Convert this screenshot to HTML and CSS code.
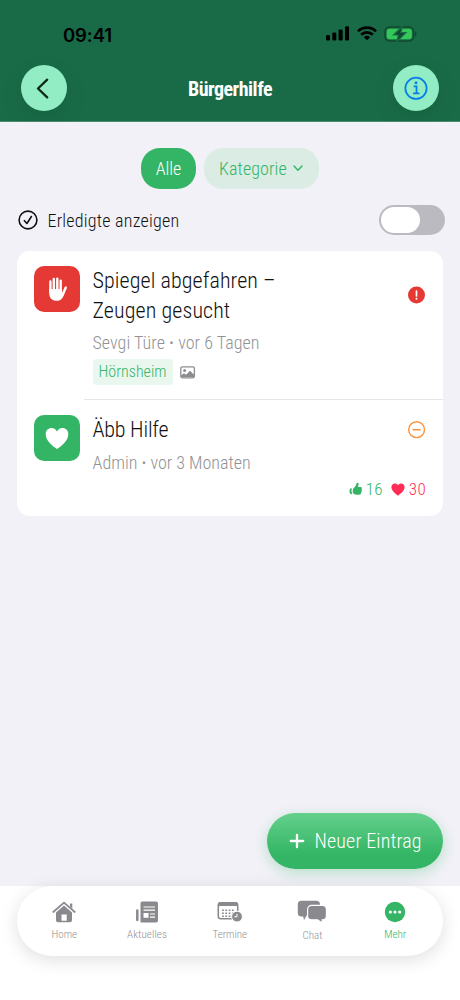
FILE: index.html
```html
<!DOCTYPE html>
<html lang="de">
<head>
<meta charset="utf-8">
<title>Bürgerhilfe</title>
<link rel="stylesheet" href="styles.css">
</head>
<body>
<div class="app">
  <header class="header">
    <div class="status">
      <span class="clock">09:41</span>
      <div class="status-icons">
        <svg width="24" height="15" viewBox="0 0 24 15"><rect x="0" y="9" width="4" height="5.500" rx="1.200"/><rect x="6.300" y="6.500" width="4" height="8" rx="1.200"/><rect x="12.600" y="3.500" width="4" height="11" rx="1.200"/><rect x="19" y="0.300" width="4" height="14.200" rx="1.200"/></svg>
        <svg class="wifi" width="20" height="15" viewBox="0 0 20 15" fill="none" stroke="#000" stroke-width="2.700"><path d="M1 5.400a12.800 12.800 0 0 1 18 0"/><path d="M4.200 8.800a8.300 8.300 0 0 1 11.600 0"/><path d="M10 14.300L6.900 11.300a4.500 4.500 0 0 1 6.200 0z" fill="#000" stroke="none"/></svg>
        <svg width="34" height="16" viewBox="0 0 34 16"><rect x="1" y="1" width="28.600" height="14" rx="4.500" fill="none" stroke="#104a2c" stroke-width="1.500"/><path d="M31 5.500c2 .6 2 4.400 0 5z" fill="#104a2c"/><rect x="2.700" y="2.700" width="25.200" height="10.600" rx="3" fill="#35c759"/><path d="M18.500 0L9.500 9h5l-2 7 9.500-9.500h-5.200z" fill="#104a2c" stroke="#196b47" stroke-width="1.200"/></svg>
      </div>
    </div>
    <div class="bar">
      <button class="round"><svg width="46" height="46" viewBox="0 0 46 46" fill="none" stroke="#0b2b12" stroke-width="2.300" stroke-linecap="round" stroke-linejoin="round"><path d="M26.200 14.700L17 23.500l9.200 8.900"/></svg></button>
      <h1 class="title"><span class="t t-head">Bürgerhilfe</span></h1>
      <button class="round"><svg width="46" height="46" viewBox="0 0 46 46" fill="none" stroke="#087fe8" stroke-width="1.800"><circle cx="23" cy="23.300" r="10.600"/><path d="M20.600 21.300h2.900v6.700M20 28.300h6.500"/><circle cx="23" cy="17.800" r="1.500" fill="#087fe8" stroke="none"/></svg></button>
    </div>
  </header>

  <main class="content">
    <div class="filters">
      <button class="chip chip-on"><span class="t">Alle</span></button>
      <button class="chip chip-cat"><span class="t t-cat">Kategorie</span><svg width="10" height="7" viewBox="0 0 10 7" fill="none" stroke="#33b565" stroke-width="1.400" stroke-linecap="round" stroke-linejoin="round"><path d="M1 1l4 4.300L9 1"/></svg></button>
    </div>
    <div class="toggle-row">
      <svg width="20" height="20" viewBox="0 0 20 20" fill="none" stroke="#111" stroke-width="1.600" stroke-linecap="round" stroke-linejoin="round"><circle cx="10" cy="10" r="8.900"/><path d="M6.400 10.700l2.500 2.800 4.500-7"/></svg>
      <span class="t t-done">Erledigte anzeigen</span>
      <span class="switch"><span class="knob"></span></span>
    </div>

    <section class="card">
      <article class="entry first">
        <div class="tile red"><svg width="46" height="46" viewBox="0 0 46 46" fill="none" stroke="#fff" stroke-linecap="round" stroke-linejoin="round"><path d="M16.400 15.500v10M19.800 13v12M23.300 12.600v12M26.700 14.800v11" stroke-width="2.400"/><path d="M31.800 21.600L28.400 29" stroke-width="2.500"/><path d="M15.200 23h12.700v4.500l3-1.500c-1.600 5.700-3.500 8.800-8 8.800-4.900 0-7.700-2.700-7.700-7.800z" fill="#fff" stroke="none"/></svg></div>
        <div class="body">
          <h2 class="entry-title"><span class="t t-title1">Spiegel abgefahren –</span><span class="t t-title1">Zeugen gesucht</span></h2>
          <p class="meta"><span class="t t-meta1">Sevgi Türe <b>·</b> vor 6 Tagen</span></p>
          <div class="tags"><span class="tag"><span class="t t-tag">Hörnsheim</span></span><svg width="16" height="13" viewBox="0 0 16 13"><rect x=".8" y=".8" width="13.600" height="11" rx="1.500" fill="none" stroke="#8c8c90" stroke-width="1.300"/><circle cx="4.600" cy="4.600" r="1.500" fill="#8c8c90"/><path d="M1 11V9.500l3-2.300 2 1.500 4-4 4.300 4.200V11z" fill="#8c8c90"/></svg></div>
        </div>
        <svg class="state" width="18" height="18" viewBox="0 0 18 18"><circle cx="8.500" cy="9" r="8.500" fill="#e53935"/><path d="M8.500 5v5" stroke="#fff" stroke-width="1.700" stroke-linecap="round"/><circle cx="8.500" cy="12.700" r="1" fill="#fff"/></svg>
      </article>
      <article class="entry second">
        <div class="tile green"><svg width="46" height="46" viewBox="0 0 46 46"><path d="M23 34c-5-3.500-11.300-8.600-11.300-14.800 0-7.100 8.500-8.300 11.300-2.800 2.800-5.500 11.300-4.300 11.300 2.800C34.300 25.400 28 30.500 23 34z" fill="#fff"/></svg></div>
        <div class="body">
          <h2 class="entry-title"><span class="t t-title3">Äbb Hilfe</span></h2>
          <p class="meta"><span class="t">Admin <b>·</b> vor 3 Monaten</span></p>
        </div>
        <svg class="state" width="18" height="18" viewBox="0 0 18 18" fill="none" stroke="#fb923a" stroke-width="1.400" stroke-linecap="round"><circle cx="8.600" cy="8.700" r="7.900"/><path d="M5.100 8.700h7"/></svg>
      </article>
      <div class="counts">
        <svg width="13" height="14" viewBox="0 0 13 14" fill="#33b565"><path d="M4.500 6.200C6 5 7 3.500 7.500 1.500 7.700.3 9.800.4 9.600 2.500L9 5h2.300c1.500 0 1.900 1.200 1.200 1.900.7.700.5 1.600-.1 2 .5.700.2 1.500-.4 1.800.2 1.300-.7 2-2.200 2H7.500c-2.400 0-3.800-1.500-3.800-3.500 0-1.200.2-2.300.8-3z"/><path d="M2.900 6.300H2C.7 6.900.4 8.200.5 9.400c.1 1.500.8 2.700 2 2.800h1c-1.100-1.700-1.300-4-.6-5.900z"/></svg>
        <span class="t t-16">16</span>
        <svg width="14" height="13" viewBox="0 0 14 13"><path d="M7 12.700C3.700 10.500.4 7.400.4 4.100.4.200 5.200-.9 7 2.200 8.800-.9 13.600.2 13.600 4.100c0 3.300-3.300 6.400-6.600 8.600z" fill="#ff2d55"/></svg>
        <span class="t t-30">30</span>
      </div>
    </section>
    <button class="fab"><svg width="16" height="16" viewBox="0 0 16 16" stroke="#fff" stroke-width="2.300" stroke-linecap="round"><path d="M8 1.800v12.400M1.800 8h12.400"/></svg><span class="t t-fab">Neuer Eintrag</span></button>
  </main>

  <footer class="footer">
    <nav class="nav">
      <a class="item"><svg width="24" height="22" viewBox="0 0 24 22"><path d="M1.200 11L12 1.600 22.800 11" fill="none" stroke="#8a898e" stroke-width="1.700" stroke-linecap="round" stroke-linejoin="round"/><path d="M18 2.500h2.300v5L18 5.500z" fill="#8a898e"/><path fill-rule="evenodd" d="M12 4.500l8 7v7.700a2 2 0 0 1-2 2H6a2 2 0 0 1-2-2v-7.700zM9.500 13.500v6.300h5.200v-6.300z" fill="#8a898e"/></svg><span class="t">Home</span></a>
      <a class="item"><svg width="24" height="22" viewBox="0 0 24 22"><path fill-rule="evenodd" d="M8 .5h13a2 2 0 0 1 2 2v17a2 2 0 0 1-2 2H5.500V2.500a2 2 0 0 1 2.500-2zM8.500 12v4.800h5V12z" fill="#8a898e"/><path d="M2.300 9.500v9.500" stroke="#8a898e" stroke-width="2.500" stroke-linecap="round"/><path d="M8.500 6h11.500M8.500 9.200h11.500M15 13h5M15 16.200h5" stroke="#fff" stroke-width="1.200"/></svg><span class="t n-akt">Aktuelles</span></a>
      <a class="item"><svg width="26" height="22" viewBox="0 0 26 22"><rect x="1.300" y="1.700" width="19.400" height="16" rx="2.500" fill="#fff" stroke="#8a898e" stroke-width="1.600"/><path d="M1 5V3.500A2.500 2.500 0 0 1 3.500 1h15A2.500 2.500 0 0 1 21 3.500V5z" fill="#8a898e"/><path d="M5 9.200h13M5 12.200h11M5 15.200h9" stroke="#8a898e" stroke-width="1.600" stroke-dasharray="1.800 1.500"/><circle cx="20" cy="15.600" r="5.400" fill="#8a898e" stroke="#fff" stroke-width="1"/><path d="M20 12.800v3h-2.700" fill="none" stroke="#fff" stroke-width="1"/></svg><span class="t">Termine</span></a>
      <a class="item chat"><svg width="30" height="24" viewBox="0 0 30 24"><path d="M4.500.8h14.800a3.800 3.800 0 0 1 3.700 3.700v11H9.500L7 20.300l-.8-3.700H4.500A3.700 3.700 0 0 1 .8 13V4.500A3.700 3.700 0 0 1 4.500.8z" fill="#8a898e"/><path d="M14.500 5.400h11a4 4 0 0 1 3.900 4v6.500a4 4 0 0 1-3.900 3.900h-.3v3.300l-4.700-3.300h-6a4 4 0 0 1-3.900-3.900V9.400a4 4 0 0 1 3.900-4z" fill="#8a898e" stroke="#fff" stroke-width="1.200"/></svg><span class="t">Chat</span></a>
      <a class="item active"><svg width="22" height="22" viewBox="0 0 22 22"><circle cx="11" cy="11" r="10.200" fill="#33b565"/><g fill="#fff"><circle cx="6.300" cy="11" r="1.600"/><circle cx="11" cy="11" r="1.600"/><circle cx="15.700" cy="11" r="1.600"/></g></svg><span class="t">Mehr</span></a>
    </nav>
  </footer>
</div>
</body>
</html>
```
FILE: styles.css
```css
* { box-sizing: border-box; margin: 0; padding: 0; }
body { background: #fff; font-family: Roboto, "Liberation Sans Narrow", sans-serif; font-stretch: 75%; font-weight: 300; color: #111; }
button { border: 0; background: none; font: inherit; color: inherit; }
svg { display: block; flex: none; }
.app { width: 460px; height: 1000px; display: flex; flex-direction: column; overflow: hidden; }
.t { display: block; white-space: nowrap; width: max-content; }

.header { height: 122px; background: #196b47; border-bottom: 1px solid #4b8c6d; flex: none; }
.status { display: flex; justify-content: space-between; height: 65px; padding: 26px 42px 0 63px; }
.clock { font: 600 18.500px/18px Inter, sans-serif; color: #000; letter-spacing: -.1px; }
.status-icons { display: flex; gap: 7px; }
.bar { display: flex; justify-content: space-between; align-items: center; padding: 0 21px; }
.round { width: 46px; height: 46px; border-radius: 50%; background: #92ecc4; box-shadow: 0 8px 25px rgba(0, 0, 0, .08); }
.title { font-size: 20px; line-height: 26px; font-weight: 700; color: #fff; padding-top: 2px; }
.t-head { letter-spacing: -.5px; }

.content { height: 764px; flex: none; background: #f2f1f7; display: flex; flex-direction: column; padding: 26px 17px 17px; }
.filters { display: flex; justify-content: center; gap: 8px; font-size: 18px; height: 41px; }
.chip { display: flex; align-items: center; height: 41px; border-radius: 19px; }
.chip-on { width: 55px; justify-content: center; background: #33b565; color: #fff; }
.chip-cat { width: 115px; gap: 6px; padding-left: 15px; background: #daece4; color: #33b565; }
.t-cat { letter-spacing: .1px; }
.toggle-row { display: flex; align-items: center; height: 30px; margin: 16px -2px 0 1px; font-size: 18px; gap: 9.500px; }
.t-done { letter-spacing: .22px; }
.switch { width: 66px; height: 30px; border-radius: 15px; background: #bbbac0; margin-left: auto; padding: 2px; }
.knob { display: block; width: 39px; height: 26px; border-radius: 13px; background: #fff; }

.card { height: 265px; margin-top: 16px; border-radius: 13px; background: #fff; }
.entry { display: flex; padding: 15px 17px 0; }
.first { height: 148px; }
.second { height: 77px; }
.tile { width: 46px; height: 46px; border-radius: 10px; flex: none; }
.red { background: #e53935; }
.green { background: #33b565; }
.body { flex: 1; margin-left: 12.500px; }
.entry-title { font-size: 22px; line-height: 29.500px; font-weight: 300; }
.t-title1 { letter-spacing: .1px; }
.t-title3 { letter-spacing: -.2px; }
.meta { font-size: 18px; line-height: 24px; margin-top: 6px; color: #929296; }
.meta b { font-weight: 600; }
.t-meta1 { letter-spacing: .05px; }
.tags { display: flex; align-items: center; gap: 7px; margin-top: 4px; }
.tag { width: 80px; height: 26px; border-radius: 4px; background: #eaf7ef; color: #33b565; font-size: 16px; line-height: 26px; padding-left: 6px; }
.t-tag { letter-spacing: 0; }
.first .state { margin-top: 20px; }
.second .state { margin-top: 6px; }
.second { border-top: 1px solid #e6e6e9; margin-left: 67px; padding-left: 0; padding-top: 15px; }
.second .tile { margin-left: -50px; }
.counts { display: flex; align-items: center; justify-content: flex-end; height: 24px; font-size: 17px; padding-right: 17px; margin-top: 1px; }
.t-16 { color: #33b565; margin: 0 8.500px 0 4px; letter-spacing: .3px; }
.t-30 { color: #ff2d55; margin-left: 3.500px; letter-spacing: .3px; }

.fab { display: flex; align-items: center; gap: 10px; align-self: flex-end; margin-top: auto; width: 176px; height: 56px; border-radius: 28px; padding-left: 21.500px; background: linear-gradient(#64d08c, #33b565 75%); color: #fff; font-size: 20px; box-shadow: 0 4px 14px rgba(51, 181, 101, .3); }
.t-fab { letter-spacing: .15px; }

.footer { flex: 1; background: #fff; padding: 0 17px; }
.nav { display: flex; height: 70px; border-radius: 35px; padding: 15px 6.500px 0 6px; background: #fff; box-shadow: 0 4px 18px rgba(0, 0, 0, .13); font-size: 11px; color: #929296; }
.n-akt { letter-spacing: .12px; }
.item { flex: 1; display: flex; flex-direction: column; align-items: center; gap: 5px; line-height: 14px; }
.chat { gap: 5px; margin-top: -1px; }
.active { color: #33b565; }
```
